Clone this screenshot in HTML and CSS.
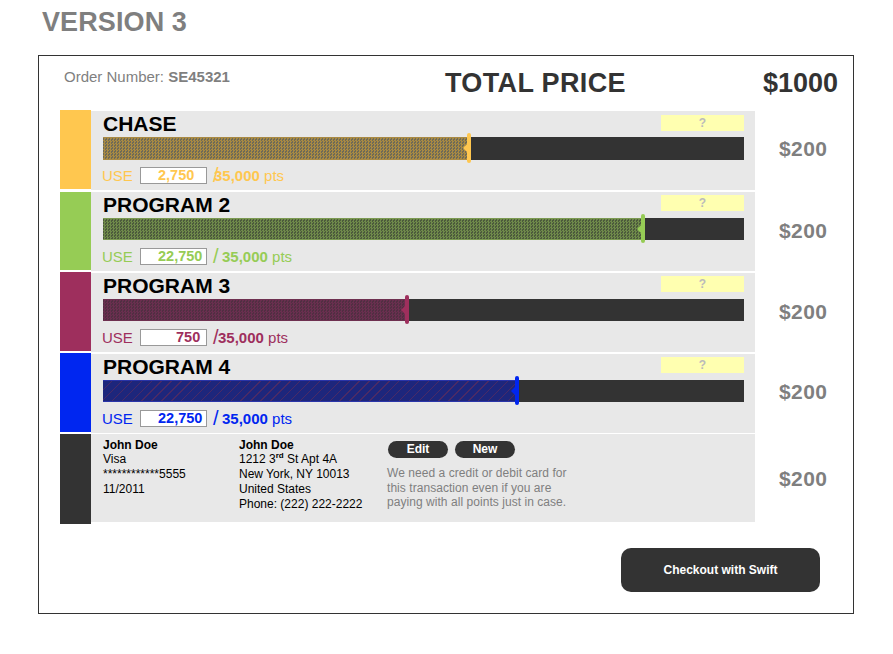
FILE: index.html
```html
<!DOCTYPE html>
<html lang="en">
<head>
  <meta charset="UTF-8" />
  <title>Version 3</title>
  <link rel="stylesheet" href="styles.css">
</head>
<body>
  <h1 class="page-title">VERSION 3</h1>
  <div class="frame">
    <div class="top">
      <div class="order">Order Number: <b>SE45321</b></div>
      <div class="total-label">TOTAL PRICE</div>
      <div class="total-value">$1000</div>
    </div>

    <div class="row chase">
      <div class="swatch"></div>
      <div class="panel">
        <div class="panel-head"><div class="name">CHASE</div><div class="help">?</div></div>
        <div class="bar"><div class="fill" style="width: 366px"><span class="marker"></span></div></div>
        <div class="use">USE <span class="box">2,750</span><span class="slash">/</span><span class="max"><b>35,000</b> pts</span></div>
      </div>
      <div class="price">$200</div>
    </div>

    <div class="row program2">
      <div class="swatch"></div>
      <div class="panel">
        <div class="panel-head"><div class="name">PROGRAM 2</div><div class="help">?</div></div>
        <div class="bar"><div class="fill" style="width: 540px"><span class="marker"></span></div></div>
        <div class="use">USE <span class="box">22,750</span><span class="slash">/</span><span class="max"><b>35,000</b> pts</span></div>
      </div>
      <div class="price">$200</div>
    </div>

    <div class="row program3">
      <div class="swatch"></div>
      <div class="panel">
        <div class="panel-head"><div class="name">PROGRAM 3</div><div class="help">?</div></div>
        <div class="bar"><div class="fill" style="width: 304px"><span class="marker"></span></div></div>
        <div class="use">USE <span class="box short">750</span><span class="slash">/</span><span class="max"><b>35,000</b> pts</span></div>
      </div>
      <div class="price">$200</div>
    </div>

    <div class="row program4">
      <div class="swatch"></div>
      <div class="panel">
        <div class="panel-head"><div class="name">PROGRAM 4</div><div class="help">?</div></div>
        <div class="bar"><div class="fill" style="width: 414px"><span class="marker"></span></div></div>
        <div class="use">USE <span class="box">22,750</span><span class="slash">/</span><span class="max"><b>35,000</b> pts</span></div>
      </div>
      <div class="price">$200</div>
    </div>

    <div class="row card-row">
      <div class="swatch"></div>
      <div class="panel card-panel">
        <div class="card-col card-billing">
          <b>John Doe</b>Visa<br>************5555<br>11/2011
        </div>
        <div class="card-col card-address">
          <b>John Doe</b>1212 3<sup>rd</sup> St Apt 4A<br>New York, NY 10013<br>United States<br>Phone: (222) 222-2222
        </div>
        <div class="card-col card-actions">
          <div class="pills"><a class="pill">Edit</a><a class="pill">New</a></div>
          <p class="note">We need a credit or debit card for<br>this transaction even if you are<br>paying with all points just in case.</p>
        </div>
      </div>
      <div class="price">$200</div>
    </div>

    <div class="checkout-wrap"><button class="checkout">Checkout with Swift</button></div>
  </div>
</body>
</html>
```

FILE: styles.css
```css
body {
  margin: 0;
  font-family: "Liberation Sans", Arial, sans-serif;
  background: white;
  color: #000;
}
.page-title {
  margin: 0;
  padding: 6px 0 0 42px;
  height: 55px;
  box-sizing: border-box;
  font-size: 27px;
  line-height: 32px;
  font-weight: bold;
  letter-spacing: 0.1px;
  color: #7f7f7f;
}
.frame {
  box-sizing: border-box;
  width: 816px;
  height: 559px;
  margin-left: 38px;
  border: 1px solid #333;
  padding: 0 0 0 21px;
}
.top {
  display: flex;
  align-items: center;
  height: 54px;
}
.order {
  width: 385px;
  padding-left: 4px;
  box-sizing: border-box;
  margin-top: -14px;
  font-size: 15px;
  color: #7f7f7f;
}
.total-label {
  width: 318px;
  font-size: 27px;
  font-weight: bold;
  letter-spacing: 0.35px;
  color: #333;
}
.total-value {
  font-size: 27px;
  font-weight: bold;
  color: #333;
}

.row {
  display: flex;
  height: 79px;
  margin-bottom: 2px;
}
.swatch {
  width: 31px;
  background: var(--c);
}
.program2 .swatch {
  margin-top: 1px;
}
.panel {
  box-sizing: border-box;
  width: 664px;
  height: 79px;
  margin-top: 1px;
  padding: 0 11px 0 12px;
  background: #e8e8e8;
}
.panel-head {
  display: flex;
  justify-content: space-between;
  height: 26px;
}
.name {
  font-size: 21px;
  font-weight: bold;
  line-height: 26px;
}
.help {
  width: 83px;
  height: 16px;
  margin-top: 3px;
  background: #ffffb0;
  color: #bbb;
  font-size: 12px;
  font-weight: bold;
  line-height: 16px;
  text-align: center;
}
.chase .help {
  margin-top: 4px;
}
.bar {
  height: 22px;
  background: #333;
}
.chase .bar {
  height: 23px;
}
.fill {
  position: relative;
  box-sizing: border-box;
  height: 100%;
  border-top: 1px solid var(--e);
  border-bottom: 1px solid var(--e);
  background-image: repeating-conic-gradient(var(--d1) 0 25%, var(--d2) 0 50%);
  background-size: 3px 3px;
}
.marker {
  position: absolute;
  top: -5px;
  bottom: -4px;
  right: -2px;
  width: 4px;
  border-radius: 2px;
  background: var(--c);
}
.marker::before {
  content: "";
  position: absolute;
  top: 50%;
  left: -4px;
  margin-top: -4px;
  border-style: solid;
  border-width: 4px 4px 4px 0;
  border-color: transparent var(--c) transparent transparent;
}
.use {
  display: flex;
  align-items: center;
  height: 17px;
  margin: 8px 0 0 -1px;
  font-size: 15px;
  color: var(--c);
  white-space: pre;
}
.chase .use {
  margin-top: 7px;
}
.box {
  box-sizing: border-box;
  width: 67px;
  height: 17px;
  margin-left: 3px;
  padding-left: 17px;
  background: white;
  border: 1px solid #999;
  font-size: 14.5px;
  font-weight: bold;
  line-height: 15px;
}
.box.short {
  padding-left: 35px;
}
.slash {
  width: 4px;
  margin-left: 6px;
  font-size: 20px;
  line-height: 17px;
}
.max {
  margin-left: 5px;
}
.chase .max {
  margin-left: -3px;
}
.program3 .max {
  margin-left: 1px;
}
.price {
  flex: 1;
  padding-left: 24px;
  font-size: 21px;
  font-weight: bold;
  letter-spacing: 0.4px;
  line-height: 79px;
  color: #7f7f7f;
}
.chase .price, .program4 .price {
  line-height: 77px;
}

.chase { --c: #ffc74f; --e: #a98a45; --d1: #a98a42; --d2: #6e6a58; }
.program2 { --c: #96cc55; --e: #7c9a52; --d1: #6f8a4a; --d2: #4c5a3c; }
.program3 { --c: #9e2f5d; --e: #6e3050; --d1: #6a2f4f; --d2: #512f42; }
.program4 { --c: #0026f0; --e: #2a34a8; --d1: #1d267c; --d2: #1d267c; }
.program4 .fill {
  background-image: repeating-linear-gradient(135deg, #1d267c 0 6px, #4a2a66 6px 7px);
  background-size: auto;
}

.card-row {
  height: 90px;
  margin-bottom: 0;
}
.card-row .swatch {
  background: #333;
}
.card-panel {
  display: flex;
  height: 88px;
  margin-top: 0;
  padding-top: 4px;
  font-size: 12px;
  line-height: 15px;
}
.card-col b {
  display: block;
  height: 14px;
}
.card-billing {
  width: 136px;
}
.card-address {
  width: 148px;
}
.card-address sup {
  font-size: 8px;
  font-weight: bold;
  line-height: 0;
}
.pills {
  display: flex;
  gap: 7px;
  margin: 3px 0 0 1px;
}
.pill {
  width: 60px;
  height: 17px;
  border-radius: 9px;
  background: #333;
  color: white;
  font-weight: bold;
  line-height: 17px;
  text-align: center;
}
.note {
  margin: 8px 0 0;
  color: #7f7f7f;
  line-height: 14.5px;
  letter-spacing: 0.05px;
}
.card-row .price {
  line-height: 90px;
}

.checkout-wrap {
  display: flex;
  margin-top: 24px;
  padding-left: 561px;
}
.checkout {
  width: 199px;
  height: 44px;
  border: none;
  border-radius: 10px;
  background: #333;
  color: white;
  font-family: inherit;
  font-size: 12px;
  font-weight: bold;
}
```
